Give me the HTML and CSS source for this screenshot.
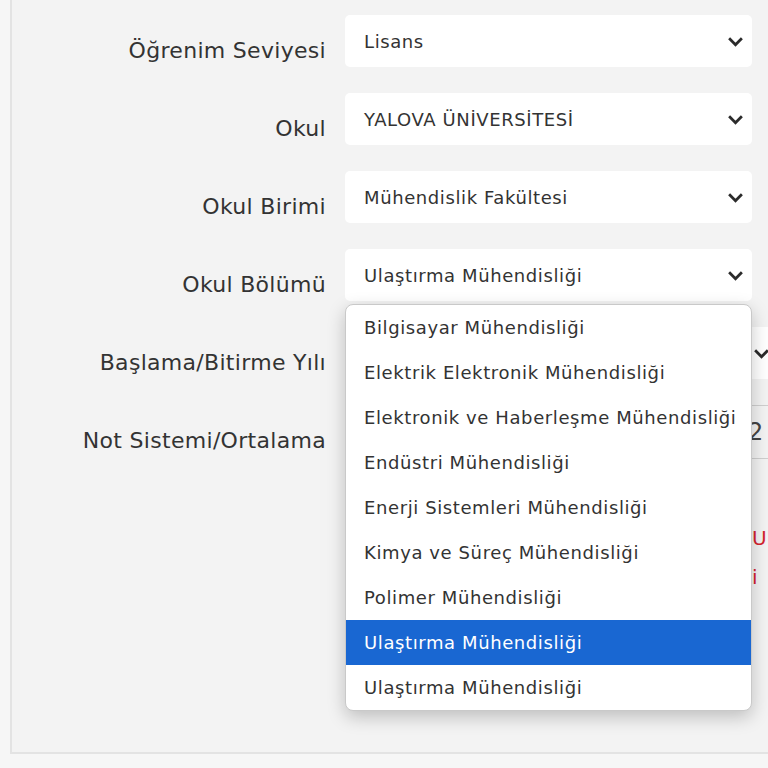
FILE: index.html
```html
<!DOCTYPE html>
<html lang="tr">

<head>
    <meta charset="UTF-8">
    <meta name="viewport" content="width=device-width, initial-scale=1.0">
    <title>Eğitim Bilgileri</title>
    <link rel="stylesheet" href="styles.css">
</head>

<body>
    <div class="panel">
        <form class="edu-form">

            <div class="row">
                <label class="row-label">Öğrenim Seviyesi</label>
                <div class="select">
                    <span>Lisans</span>
                    <svg class="chev" viewBox="0 0 16 10"><polyline points="2,2 8,8 14,2" /></svg>
                </div>
            </div>

            <div class="row">
                <label class="row-label">Okul</label>
                <div class="select">
                    <span>YALOVA ÜNİVERSİTESİ</span>
                    <svg class="chev" viewBox="0 0 16 10"><polyline points="2,2 8,8 14,2" /></svg>
                </div>
            </div>

            <div class="row">
                <label class="row-label">Okul Birimi</label>
                <div class="select">
                    <span>Mühendislik Fakültesi</span>
                    <svg class="chev" viewBox="0 0 16 10"><polyline points="2,2 8,8 14,2" /></svg>
                </div>
            </div>

            <div class="row row-open">
                <label class="row-label">Okul Bölümü</label>
                <div class="select">
                    <span>Ulaştırma Mühendisliği</span>
                    <svg class="chev" viewBox="0 0 16 10"><polyline points="2,2 8,8 14,2" /></svg>
                </div>

                <!-- açık liste -->
                <ul class="options">
                    <li>Bilgisayar Mühendisliği</li>
                    <li>Elektrik Elektronik Mühendisliği</li>
                    <li>Elektronik ve Haberleşme Mühendisliği</li>
                    <li>Endüstri Mühendisliği</li>
                    <li>Enerji Sistemleri Mühendisliği</li>
                    <li>Kimya ve Süreç Mühendisliği</li>
                    <li>Polimer Mühendisliği</li>
                    <li class="active">Ulaştırma Mühendisliği</li>
                    <li>Ulaştırma Mühendisliği</li>
                </ul>
            </div>

            <div class="row">
                <label class="row-label">Başlama/Bitirme Yılı</label>
                <div class="select select-wide">
                    <span>2018</span>
                    <svg class="chev" viewBox="0 0 16 10"><polyline points="2,2 8,8 14,2" /></svg>
                </div>
            </div>

            <div class="row">
                <label class="row-label">Not Sistemi/Ortalama</label>
                <div class="grade">
                    <div class="grade-sys"></div>
                    <input class="grade-avg" type="text" value="2">
                </div>
            </div>

            <div class="warn">
                <p>U</p>
                <p>i</p>
            </div>

        </form>
    </div>
</body>

</html>
```

FILE: styles.css
```css
* {
    box-sizing: border-box;
}

body {
    margin: 0;
    height: 768px;
    overflow: hidden;
    background: #f6f6f6;
    font-family: "DejaVu Sans", Verdana, sans-serif;
    color: #333;
}

.panel {
    margin-left: 10px;
    height: 754px;
    background: #f3f3f3;
    border-left: 2px solid #e3e3e3;
    border-bottom: 2px solid #e3e3e3;
}

.edu-form {
    padding-top: 15px;
    display: flex;
    flex-direction: column;
    gap: 26px;
}

.row {
    position: relative;
    display: grid;
    grid-template-columns: 314px 407px;
    column-gap: 19px;
    align-items: start;
}

.row-label {
    text-align: right;
    font-size: 22px;
    line-height: 22px;
    letter-spacing: 0.3px;
    padding-top: 25px;
    color: #333;
}

.select {
    height: 52px;
    background: #fff;
    border-radius: 5px;
    display: flex;
    align-items: center;
    justify-content: space-between;
    padding: 0 8px 0 19px;
    font-size: 18px;
    letter-spacing: 0.6px;
}

.select-wide {
    width: 433px;
}

.chev {
    width: 17px;
    height: 11px;
    fill: none;
    stroke: #2b2b2b;
    stroke-width: 2.6;
}

/* ortalama kutusu: sistem seçimi + not */
.grade {
    display: flex;
    width: 460px;
}

.grade-sys {
    width: 390px;
    height: 54px;
    background: #fff;
}

.grade-avg {
    width: 80px;
    height: 54px;
    border: 1px solid #cfcfcf;
    background: #f3f3f3;
    font-family: inherit;
    font-size: 24px;
    color: #444;
    padding: 0 0 0 22px;
    margin-left: -3px;
}

.warn {
    margin: 41px 0 0 740px;
    color: #d4232f;
    font-size: 20px;
}

.warn p {
    margin: 0 0 15px;
}

/* açılır liste, diğer satırların üstünde */
.options {
    position: absolute;
    z-index: 5;
    top: 55px;
    left: 333px;
    width: 407px;
    margin: 0;
    padding: 0;
    list-style: none;
    background: #fff;
    border: 1px solid #c9c9c9;
    border-radius: 8px;
    overflow: hidden;
    box-shadow: 0 6px 18px rgba(0, 0, 0, 0.22);
}

.options li {
    height: 45px;
    line-height: 45px;
    padding-left: 18px;
    font-size: 18px;
    letter-spacing: 0.6px;
    color: #333;
    white-space: nowrap;
}

.options li.active {
    background: #1967d2;
    color: #fff;
}
```
